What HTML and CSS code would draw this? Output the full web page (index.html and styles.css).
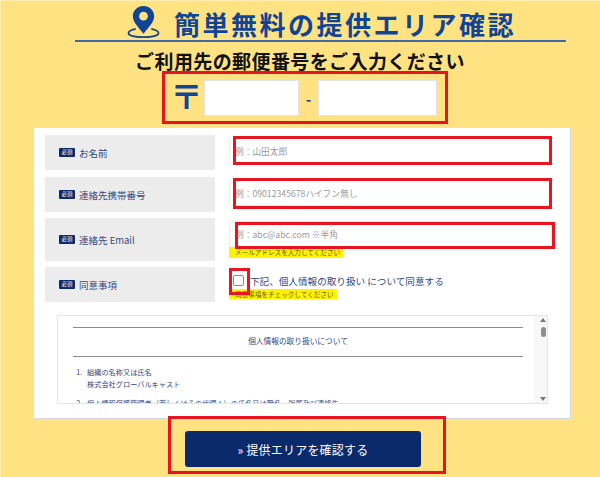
FILE: index.html
```html
<!DOCTYPE html>
<html lang="ja">
<head>
    <meta charset="UTF-8">
    <title>簡単無料の提供エリア確認</title>
    <link rel="stylesheet" href="styles.css">
</head>
<body>

<div class="page">
    <h1 class="title">
        <svg class="pin" viewBox="0 0 34 34" width="33" height="33">
            <path d="M17 1C10.800 1 6 5.700 6 11.500C6 18 13 24 17 29.500C21 24 28 18 28 11.500C28 5.700 23.200 1 17 1Z" fill="#0f4496"/>
            <circle cx="17" cy="11.500" r="4.500" fill="#ffe382"/>
            <path d="M9 24.500C4.500 25.500 1.500 27 1.500 28.800C1.500 31.500 8.500 33 17 33C25.500 33 32.500 31.500 32.500 28.800C32.500 27 29.500 25.500 25 24.500" fill="none" stroke="#0f4496" stroke-width="1.800"/>
        </svg>
        <span class="title-text">簡単無料の提供エリア確認</span>
    </h1>
    <p class="lead">ご利用先の郵便番号をご入力ください</p>

    <div class="zip">
        <span class="zip-mark">〒</span>
        <input type="text" class="zip-first">
        <span class="zip-dash">-</span>
        <input type="text" class="zip-second">
    </div>

    <form class="card">
        <div class="row row-name">
            <div class="row-label"><span class="badge">必須</span>お名前</div>
            <div class="row-field"><input type="text" placeholder="例：山田太郎"></div>
        </div>
        <div class="row row-tel">
            <div class="row-label"><span class="badge">必須</span>連絡先携帯番号</div>
            <div class="row-field"><input type="text" placeholder="例：09012345678ハイフン無し"></div>
        </div>
        <div class="row row-mail">
            <div class="row-label"><span class="badge">必須</span>連絡先 Email</div>
            <div class="row-field">
                <input type="text" placeholder="例：abc@abc.com ※半角">
                <span class="notice">メールアドレスを入力してください</span>
            </div>
        </div>
        <div class="row row-agree">
            <div class="row-label"><span class="badge">必須</span>同意事項</div>
            <div class="row-field">
                <label class="agree"><input type="checkbox">下記、個人情報の取り扱い について同意する</label>
                <span class="notice notice-agree">同意事項をチェックしてください</span>
            </div>
        </div>

        <div class="policy">
            <div class="policy-text">
                <hr>
                <p class="policy-title">個人情報の取り扱いについて</p>
                <hr>
                <ol>
                    <li>組織の名称又は氏名<br>株式会社グローバルキャスト</li>
                    <li>個人情報保護管理者（若しくはその代理人）の氏名又は職名、所属及び連絡先</li>
                </ol>
            </div>
            <div class="scrollbar">
                <span class="arrow-up"></span>
                <span class="thumb"></span>
                <span class="arrow-down"></span>
            </div>
        </div>
    </form>

    <div class="submit-area">
        <button type="button" class="submit-button">» 提供エリアを確認する</button>
    </div>

    <!-- red marks drawn over the screenshot -->
    <div class="mark mark-zip"></div>
    <div class="mark mark-name"></div>
    <div class="mark mark-tel"></div>
    <div class="mark mark-mail"></div>
    <div class="mark mark-check"></div>
    <div class="mark mark-submit"></div>
</div>

</body>
</html>
```

FILE: styles.css
```css
* { box-sizing: border-box; }
html, body { margin: 0; padding: 0; }
body {
    background-color: #ffe382;
    font-family: "Noto Sans CJK JP", "Liberation Sans", sans-serif;
    color: #33487f;
}
.page {
    position: relative;
    width: 600px; height: 477px;
    overflow: hidden;
    padding-top: 5px;
    box-shadow: inset 1px 1px 0 #ffeeb0;
}

/* Heading */
.title {
    display: flex; align-items: center;
    height: 37px; margin: 0 34px 0 75px; padding-left: 52px;
    border-bottom: 2px solid #3f6aa5;
    color: #0f4496;
    font-size: 26px; font-weight: 700; letter-spacing: 2.500px;
    line-height: 1;
}
.pin { flex: none; margin-right: 14px; margin-top: -3px; }
.title-text { margin-top: 3px; white-space: nowrap; }
.lead {
    margin: 8px 0 0; height: 22px;
    text-align: center;
    color: #111;
    font-size: 19px; font-weight: 700; line-height: 22px;
    letter-spacing: 0.400px;
}

/* Postcode */
.zip {
    display: flex; align-items: center;
    height: 36px; margin-top: 8px; padding-left: 170px;
}
.zip-mark {
    width: 34px; margin-top: -6px;
    color: #0f4496;
    font-size: 33px; font-weight: 700; line-height: 36px;
}
.zip input {
    height: 36px;
    border: 1px solid #e2e2e2; background: #fff;
}
.zip-first { width: 95px; }
.zip-second { width: 119px; }
.zip-dash {
    width: 19px;
    text-align: center;
    color: #0f4496;
    font-size: 15px; font-weight: 700;
}

/* Form card */
.card {
    width: 537px; height: 291px;
    margin: 12px 0 0 34px;
    padding: 7px 0 0 11px;
    background: #fff;
    border-right: 1px solid #d5d8e5; border-bottom: 1px solid #d5d8e5;
}
.row { display: flex; }
.row-name { height: 35px; margin-bottom: 7px; }
.row-tel { height: 35px; margin-bottom: 6px; }
.row-mail { height: 43px; margin-bottom: 6px; }
.row-agree { height: 35px; margin-bottom: 13px; }
.row-label {
    display: flex; align-items: center;
    width: 170px; padding-left: 14px;
    background-color: #ececec;
    font-size: 9.500px;
}
.badge {
    width: 16px; height: 9px; margin-right: 4px;
    background-color: #0b2a6b; border-radius: 1px;
    color: #fff;
    font-size: 5.500px; line-height: 9px; text-align: center;
}
.row-field { width: 323px; margin-left: 14px; padding-top: 3px; }
.row-field input[type="text"] {
    display: block;
    width: 100%; height: 26px; padding: 0 5px;
    border: 1px solid #eee; border-radius: 2px;
    background: #fff;
    font-family: inherit; font-size: 8.700px;
}
.row-field input::placeholder { color: #9a9a9a; opacity: 1; }
.notice {
    display: block;
    width: 114px; height: 11px; padding-left: 6px;
    background-color: #fff200;
    color: #5f5a10;
    font-size: 6.600px; line-height: 11px;
    white-space: nowrap;
}
.notice-agree { width: 108px; height: 10px; margin-top: -2px; line-height: 10px; }
.agree {
    display: flex; align-items: center;
    height: 21px; padding-left: 4px;
    font-size: 9.600px;
    white-space: nowrap;
}
.agree input {
    width: 11px; height: 11px; margin: 0 6px 0 0;
    appearance: none;
    border: 1px solid #8a8a8a; border-radius: 2px; background: #fff;
}

/* Privacy policy box */
.policy {
    display: flex;
    width: 491px; height: 89px;
    margin-left: 12px;
    border: 1px solid #e5e5e5;
    overflow: hidden;
}
.policy-text { width: 476px; padding: 11px 0 0 15px; font-size: 7.200px; line-height: 12px; }
.policy-text hr { margin: 0; border: none; border-top: 1px solid #8c8c8c; width: 450px; }
.policy-title { margin: 0; height: 28px; width: 450px; line-height: 25px; text-align: center; font-size: 7.700px; }
.policy-text ol { margin: 9px 0 0; padding-left: 14px; }
.policy-text li { margin-bottom: 7px; }
.policy-text li::marker { content: counter(list-item) ".   "; }
.scrollbar {
    display: flex; flex-direction: column; align-items: center;
    width: 13px; margin-left: auto;
    padding: 2px 0 2px 5px;
    background-color: #f8f8f8;
}
.thumb { width: 5px; height: 10px; margin-top: 5px; background: #8e8e8e; border-radius: 3px; }
.arrow-up, .arrow-down { width: 0; height: 0; border-left: 3px solid transparent; border-right: 3px solid transparent; }
.arrow-up { border-bottom: 4px solid #777; }
.arrow-down { margin-top: auto; border-top: 4px solid #777; }

/* Submit */
.submit-area { display: flex; justify-content: center; margin-top: 12px; padding-left: 6px; }
.submit-button {
    width: 236px; height: 36px;
    border: none; border-radius: 3px;
    background-color: #0b2a6b;
    color: #fff;
    font-family: inherit; font-size: 12px; letter-spacing: 0.200px;
}

/* Red annotations */
.mark { position: absolute; border: 3px solid #e8141f; }
.mark-zip { left: 162px; top: 71px; width: 286px; height: 53px; }
.mark-name { left: 233px; top: 136px; width: 319px; height: 29px; }
.mark-tel { left: 233px; top: 178px; width: 319px; height: 31px; }
.mark-mail { left: 235px; top: 222px; width: 320px; height: 27px; }
.mark-check { left: 229px; top: 268px; width: 21px; height: 27px; }
.mark-submit { left: 168px; top: 416px; width: 278px; height: 58px; }
```
